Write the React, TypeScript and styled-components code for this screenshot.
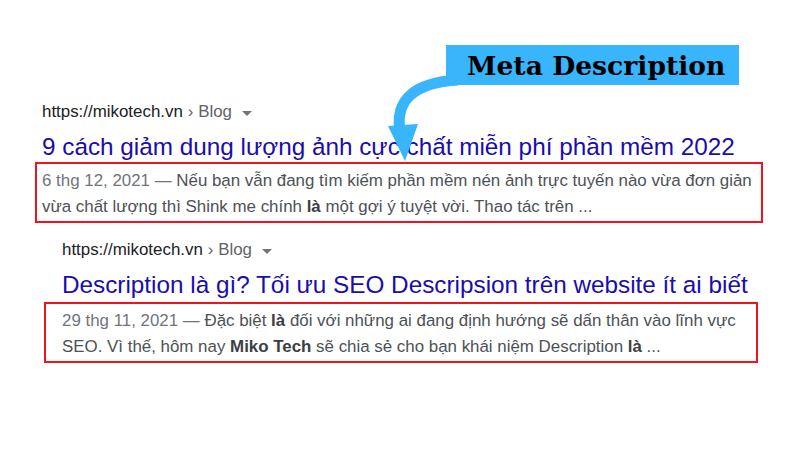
import styled, { createGlobalStyle } from "styled-components";

const GlobalStyle = createGlobalStyle`
  body {
    margin: 0;
    background: #ffffff;
    font-family: "Liberation Sans", Arial, sans-serif;
  }
`;

const Page = styled.div`
  position: relative;
  width: 800px;
  height: 450px;
  padding: 102px 0 0 42px;
  box-sizing: border-box;
  overflow: hidden;
`;

const Result = styled.div<{ $indent: number }>`
  display: flex;
  flex-direction: column;
  margin-left: ${({ $indent }) => $indent}px;
  margin-bottom: 17px;
`;

const Url = styled.div`
  display: flex;
  align-items: center;
  height: 20px;
  font-size: 16.9px;
  color: #202124;
`;

const Crumb = styled.span`
  color: #5f6368;
  margin-left: 5px;
`;

const Caret = styled.span`
  display: inline-block;
  margin-left: 10px;
  margin-top: 2px;
  border-left: 5px solid transparent;
  border-right: 5px solid transparent;
  border-top: 5px solid #70757a;
`;

const Title = styled.div`
  margin-top: 11px;
  font-size: 24.3px;
  line-height: 28px;
  color: #1a0dab;
  white-space: nowrap;
`;

const Snippet = styled.div<{ $left: number; $width: number; $gap: number }>`
  margin-top: ${({ $gap }) => $gap}px;
  margin-left: -${({ $left }) => $left}px;
  width: ${({ $width }) => $width}px;
  box-sizing: border-box;
  border: 2px solid #f0141e;
  padding: 4px 0 1px ${({ $left }) => $left - 2}px;
  font-size: 16.9px;
  line-height: 26px;
  color: #4d5156;
  white-space: nowrap;

  b {
    color: #3c4043;
  }
`;

const Date = styled.span`
  color: #70757a;
`;

const Label = styled.div`
  position: absolute;
  left: 446px;
  top: 45px;
  width: 293px;
  height: 40px;
  box-sizing: border-box;
  padding-left: 21px;
  display: flex;
  align-items: center;
  background: #39b5fc;
  color: #000000;
  font-family: "DejaVu Serif", "Liberation Serif", serif;
  font-weight: bold;
  font-size: 26.6px;
`;

const Arrow = styled.svg`
  position: absolute;
  left: 380px;
  top: 70px;
`;

const App = () => {
  return (
    <>
      <GlobalStyle />
      <Page>
        <Result $indent={0}>
          <Url>
            https://mikotech.vn<Crumb>› Blog</Crumb>
            <Caret />
          </Url>
          <Title>9 cách giảm dung lượng ảnh cực chất miễn phí phần mềm 2022</Title>
          <Snippet $left={7} $width={728} $gap={1}>
            <Date>6 thg 12, 2021 — </Date>Nếu bạn vẫn đang tìm kiếm phần mềm nén ảnh trực
            tuyến nào vừa đơn giản
            <br />
            vừa chất lượng thì Shink me chính <b>là</b> một gợi ý tuyệt vời. Thao tác trên ...
          </Snippet>
        </Result>
        <Result $indent={20}>
          <Url>
            https://mikotech.vn<Crumb>› Blog</Crumb>
            <Caret />
          </Url>
          <Title>Description là gì? Tối ưu SEO Descripsion trên website ít ai biết</Title>
          <Snippet $left={18} $width={714} $gap={3}>
            <Date>29 thg 11, 2021 — </Date>Đặc biệt <b>là</b> đối với những ai đang định hướng
            sẽ dấn thân vào lĩnh vực
            <br />
            SEO. Vì thế, hôm nay <b>Miko Tech</b> sẽ chia sẻ cho bạn khái niệm Description{" "}
            <b>là</b> ...
          </Snippet>
        </Result>
        <Arrow width="84" height="96" viewBox="0 0 84 96">
          <path
            d="M 78 10 Q 12 14 20 62"
            fill="none"
            stroke="#39b5fc"
            strokeWidth="11"
          />
          <polygon points="8,56 38,54 25,91" fill="#39b5fc" />
        </Arrow>
        <Label>Meta Description</Label>
      </Page>
    </>
  );
};

export default App;
